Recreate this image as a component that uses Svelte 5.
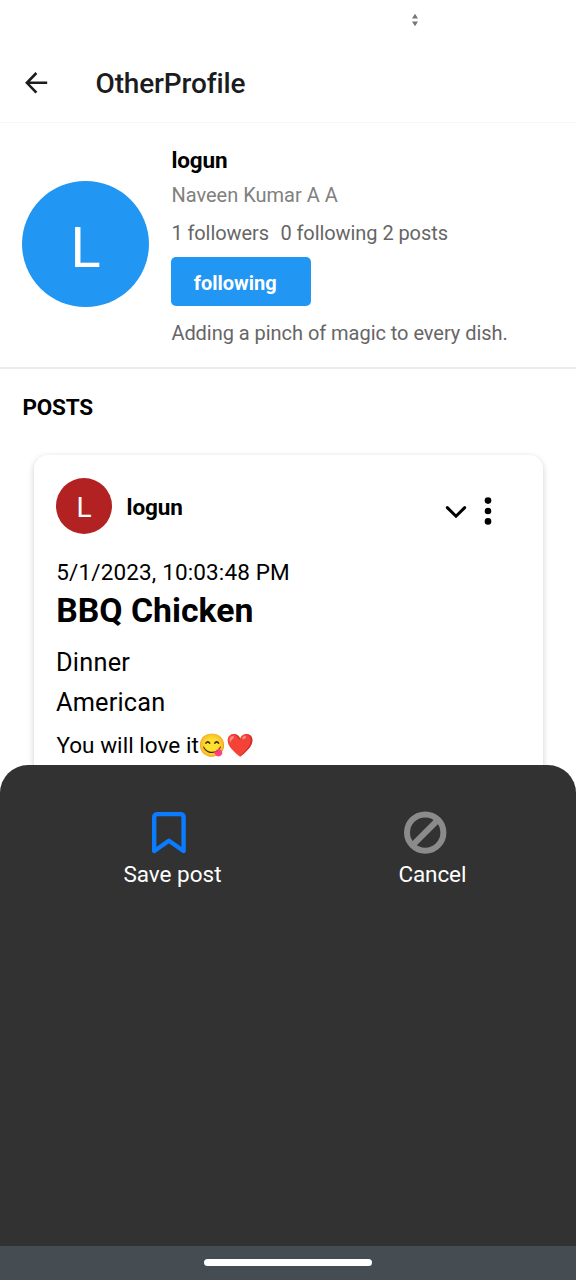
<script>
  const profile = {
    handle: 'logun',
    name: 'Naveen Kumar A A',
    stats: ['1 followers', '0 following', '2 posts'],
    bio: 'Adding a pinch of magic to every dish.'
  };
  const post = {
    date: '5/1/2023, 10:03:48 PM',
    title: 'BBQ Chicken',
    meal: 'Dinner',
    cuisine: 'American',
    text: 'You will love it'
  };
</script>

<div class="screen">
  <div class="status">
    <svg width="8" height="14" viewBox="0 0 8 14"><path d="M4 .8 7 5.6H1zM4 13.2 1 8.4h6z" fill="#777" /></svg>
  </div>
  <header>
    <svg width="24" height="24" viewBox="0 0 24 24" fill="none" stroke="#1c1c1e" stroke-width="2.6">
      <path d="M23.2 11.8H3M12.4 2 2.9 11.8l9.5 9.8" />
    </svg>
    <h1>OtherProfile</h1>
  </header>

  <section class="profile">
    <div class="avatar big"><span>L</span></div>
    <div class="info">
      <strong class="handle">{profile.handle}</strong>
      <div class="name">{profile.name}</div>
      <div class="stats">
        {#each profile.stats as s}<span>{s}</span>{/each}
      </div>
      <button>following</button>
      <div class="bio">{profile.bio}</div>
    </div>
  </section>

  <h2>POSTS</h2>

  <article>
    <div class="top">
      <div class="avatar small"><span>L</span></div>
      <strong class="handle">{profile.handle}</strong>
      <svg class="chev" width="24" height="16" viewBox="0 0 24 16" fill="none" stroke="#000" stroke-width="3" stroke-linecap="round"><path d="M3.3 3.6 12 12.2l8.7-8.6" /></svg>
      <svg class="dots" width="8" height="30" viewBox="0 0 8 30"><circle cx="4" cy="4.6" r="3.3" /><circle cx="4" cy="15" r="3.3" /><circle cx="4" cy="25.4" r="3.3" /></svg>
    </div>
    <div class="date">{post.date}</div>
    <h3>{post.title}</h3>
    <div class="meal">{post.meal}</div>
    <div class="cuisine">{post.cuisine}</div>
    <div class="text">{post.text}<span class="emoji">😋❤️</span></div>
  </article>

  <div class="sheet">
    <div class="actions">
      <div class="action save">
        <svg width="36" height="44" viewBox="0 0 36 44" fill="none" stroke="#0a7cff" stroke-width="4.4" stroke-linejoin="round"><path d="M3.2 40V6.4Q3.2 3.1 6.5 3.1H29.3Q32.6 3.1 32.6 6.4V40L17.9 29.8z" /></svg>
        <span>Save post</span>
      </div>
      <div class="action cancel">
        <svg width="44" height="44" viewBox="0 0 44 44" fill="none" stroke="#8b8b8b" stroke-width="6"><circle cx="22.2" cy="21.6" r="18.2" /><path d="m9.7 34.1 25-25" /></svg>
        <span>Cancel</span>
      </div>
    </div>
    <div class="nav"><i></i></div>
  </div>
</div>

<style>
  :global(body) { margin: 0; background: #fff; }
  .screen {
    position: relative;
    width: 576px;
    height: 1280px;
    overflow: hidden;
    background: #fff;
    font-family: Roboto, sans-serif;
    color: #000;
    box-sizing: border-box;
  }
  svg { display: block; flex: none; }
  .status { height: 44px; padding: 13px 0 0 411px; box-sizing: border-box; }
  header {
    height: 79px;
    box-sizing: border-box;
    border-bottom: 1px solid #f7f7f7;
    display: flex;
    align-items: center;
    padding: 0 0 1px 24px;
  }
  h1 { margin: 3px 0 0 47.5px; font-size: 28px; line-height: 36px; font-weight: 500; letter-spacing: -.14px; color: #1c1c1e; }
  .profile {
    display: flex;
    height: 246px;
    box-sizing: border-box;
    border-bottom: 2px solid #ededed;
    padding-left: 22.4px;
  }
  .avatar { border-radius: 50%; color: #fff; display: flex; justify-content: center; align-items: center; flex: none; }
  .big { width: 126.6px; height: 126px; margin-top: 58.4px; background: #2196f3; font-size: 56px; }
  .big span { padding-top: 7px; }
  .small { width: 56px; height: 56px; background: #b22222; font-size: 28px; }
  .small span { padding-top: 3px; }
  .info { margin-left: 22.4px; padding-top: 22px; white-space: nowrap; }
  .handle { display: block; font-size: 22.5px; line-height: 30px; font-weight: 700; letter-spacing: -.1px; }
  .name, .bio { font-size: 20px; line-height: 28px; }
  .name { margin-top: 6px; color: #808080; }
  .stats { display: flex; gap: 11.5px; margin-top: 10px; font-size: 20px; line-height: 28px; letter-spacing: -.08px; color: #666; }
  .stats span:last-child { margin-left: -6.5px; }
  .bio { color: #666; margin-top: 12.7px; letter-spacing: -.04px; }
  button {
    display: block;
    width: 140px;
    height: 49.5px;
    margin: 9.8px 0 0;
    padding: 2px 0 0 22.4px;
    border: 0;
    border-radius: 5px;
    background: #2196f3;
    color: #fff;
    text-align: left;
    font: 700 20px Roboto, sans-serif;
  }
  h2 { margin: 23px 0 0 22.5px; font-size: 22.5px; line-height: 30px; font-weight: 700; letter-spacing: -.2px; }
  article {
    margin: 33px 33.5px 0;
    height: 420px;
    box-sizing: border-box;
    padding: 22.5px 22.5px 0;
    border-radius: 14px;
    background: #fff;
    box-shadow: 0 2px 6px rgba(0, 0, 0, .2);
  }
  .top { display: flex; height: 56px; }
  .top .handle { margin: 14px 0 0 14.6px; flex: 1; }
  .chev { margin: 26px 16px 0 0; }
  .dots { margin: 18px 28px 0 0; }
  .date { margin-top: 23.3px; font-size: 22.5px; line-height: 30px; letter-spacing: .14px; padding-left: .3px; }
  h3 { margin: 3px 0 0 .3px; font-size: 33.75px; line-height: 42px; font-weight: 700; }
  .meal { margin-top: 14px; font-size: 25.3px; line-height: 34px; letter-spacing: .25px; }
  .cuisine { margin-top: 6px; font-size: 25.3px; line-height: 34px; letter-spacing: .2px; }
  .text { margin-top: 10px; font-size: 22.5px; line-height: 30px; padding-left: .4px; letter-spacing: .04px; white-space: nowrap; }
  .emoji { font-family: "Noto Color Emoji", sans-serif; }
  .sheet {
    position: absolute;
    inset: 765px 0 0 0;
    display: flex;
    flex-direction: column;
    background: #323232;
    border-radius: 28px 28px 0 0;
    overflow: hidden;
    color: #fff;
  }
  .actions { flex: 1; display: flex; padding: 46px 0 0 123.4px; }
  .action { font-size: 22.5px; line-height: 30px; white-space: nowrap; }
  .action span { display: block; margin-top: 4px; }
  .save { width: 275px; }
  .save svg { margin-left: 27.6px; }
  .cancel svg { margin-left: 4.6px; }
  .cancel span { letter-spacing: -.1px; }
  .nav { height: 34px; background: #454d53; display: flex; justify-content: center; }
  .nav i { width: 168px; height: 7px; margin-top: 13px; border-radius: 4px; background: #fff; }
</style>
